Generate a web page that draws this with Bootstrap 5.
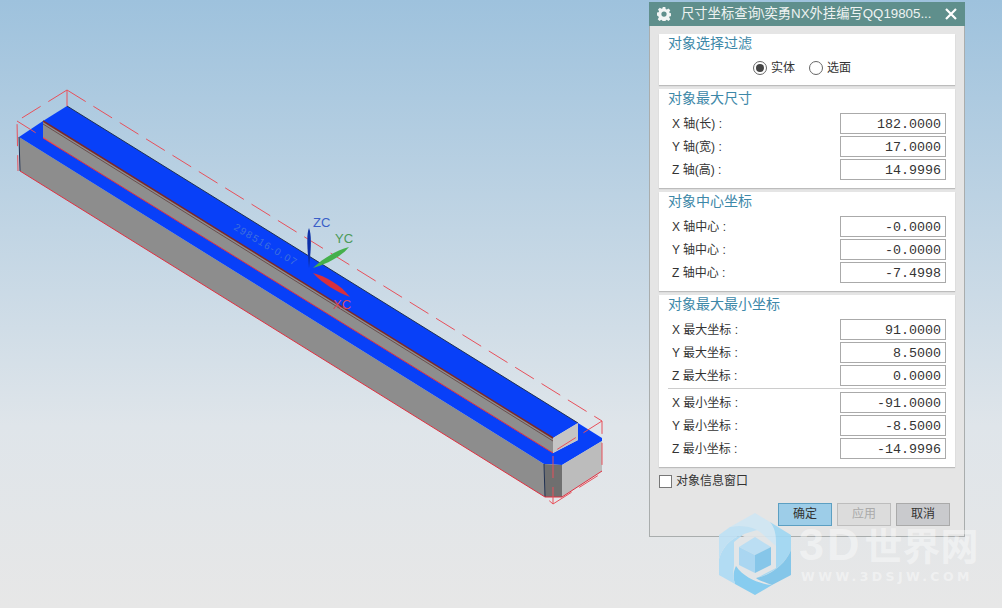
<!DOCTYPE html>
<html lang="zh">

<head>
  <meta charset="utf-8">
  <title>尺寸坐标查询</title>
  <link href="https://cdn.jsdelivr.net/npm/bootstrap@5.3.0/dist/css/bootstrap.min.css" rel="stylesheet">
  <style>
    body { width: 1002px; height: 608px; overflow: hidden; background: linear-gradient(#9ec2dd, #dfe5ea 70%, #e7e7e7); font-family: "Liberation Sans", "Noto Sans CJK SC", sans-serif; font-size: 12px; color: #333; }
    .scene { position: absolute; left: 0; top: 0; width: 1002px; height: 608px; }
    .dlg { position: absolute; left: 649px; top: 2px; width: 316px; height: 535px; background: #e5e5e5; border: 1px solid #a9adad; border-top: 0; }
    .dlg-title { height: 24px; margin: 0 -1px; background: #5f8f8c; color: #eef3f2; font-size: 13.3px; padding: 0 8px; }
    .dlg-name { margin-left: 10px; white-space: nowrap; }
    .dlg-body { padding: 8px 9px 0; }
    .box { background: #fff; box-shadow: 0 1px 1px #bcbcbc; padding: 0 9px; margin-bottom: 4px; }
    .box-head { font-size: 14px; line-height: 18px; color: #3d88a8; }
    .box-1 { height: 51px; }
    .box-2, .box-3 { height: 99px; }
    .box-4 { height: 172px; }
    .fld { height: 21px; margin: 0 0 2px 4px; }
    .fld span { padding-top: 1px; }
    .fld-first { margin-top: 6px; }
    .fld input.form-control { width: 106px; height: 21px; min-height: 21px; padding: 1px 4px 0 0; border: 1px solid #aaa; border-radius: 0; text-align: right; font: 13.33px "Liberation Mono", monospace; color: #333; background: #fff; }
    .fld-sep { border-top: 1px solid #ccc; margin: 0 0 3px; }
    .pick-row { padding-right: 10px; margin-top: 7px; }
    .pick-gap { margin-right: 14px; }
    .pick { height: 14px; width: 14px; margin: 0 4px 0 0; border: 1px solid #666; border-radius: 50%; background: #fff; display: inline-block; position: relative; }
    .pick-on::after { content: ""; position: absolute; left: 2px; top: 2px; width: 8px; height: 8px; border-radius: 50%; background: #444; }
    .tick { width: 13px; height: 13px; border: 1px solid #777; background: #fff; }
    .tick-row { margin-top: 5px; }
    .acts { gap: 5px; padding: 0 14px 10px 0; }
    .acts .btn { width: 54px; height: 23px; padding: 0; font-size: 12px; border-radius: 0; color: #333; line-height: 21px; }
    .btn-ok { background: #9dcde8; border: 1px solid #5c9fc2; }
    .btn-off { background: #dcdcdc; border: 1px solid #bdbdbd; color: #aaa !important; }
    .btn-no { background: #c9cacd; border: 1px solid #aaa; }
    .mark-title { position: absolute; left: 799px; top: 522px; color: rgba(255,255,255,.42); font-weight: 700; font-size: 38px; line-height: 46px; white-space: nowrap; }
    .mark-title b { font-size: 45px; letter-spacing: 3px; margin-right: 2px; }
    .mark-url { position: absolute; left: 801px; top: 569px; color: rgba(255,255,255,.42); font: 700 12.5px/15px "DejaVu Sans", sans-serif; letter-spacing: 3.4px; white-space: nowrap; }
  </style>
</head>

<body>
  <svg class="scene" viewBox="0 0 1002 608" font-family="Liberation Sans, sans-serif">
    <!-- part -->
    <polygon points="19,137 544,464 545,497 20,171" fill="#8d8d8d" />
    <polygon points="43,121 553,438 553,453 43,138" fill="#8e8e8e" />
    <polygon points="67,106 578,423 553,438 43,121" fill="#0840f8" />
    <polygon points="19,137 43,121 43,138 553,453 578,440 578,423 602,438 602,441 562,465 544,464" fill="#0840f8" />
    <polygon points="553,438 578,423 578,440 553,453" fill="#c5c5c5" />
    <polygon points="544,464 562,465 562,497 545,497" fill="#6f6f6f" />
    <polygon points="562,465 602,441 602,471 562,497" fill="#bcbcbc" />
    <path d="M67 106L578 423M19 137L20 171M544 464L545 497" stroke="#1f3052" stroke-width="1" fill="none" />
    <path d="M43 121L553 438" stroke="#7a2a2a" stroke-width="1.5" fill="none" />
    <path d="M43 124L553 441" stroke="#5a3030" stroke-width=".7" fill="none" />
    <path d="M43 138L553 453M20 171L545 497L562 497L602 471" stroke="#e03040" stroke-width="1" fill="none" />
    <!-- bounding box -->
    <path d="M67 90L17 121L18 171M67 90L67 106M67 90L602 421L602 471M17 121L60 148M602 421L553 452L553 504L545 497M553 504L602 473" stroke="#e8505a" stroke-width="1" stroke-dasharray="22 9" fill="none" />
    <!-- axes -->
    <text x="313" y="227" fill="#3a5fc8" font-size="13">ZC</text>
    <text x="335" y="243" fill="#4c9a58" font-size="13">YC</text>
    <text x="333" y="309" fill="#d84a58" font-size="13">XC</text>
    <path d="M309 228C311.500 234 311.500 246 309 268C307 246 306.500 234 309 228Z" fill="#0c2fa8" />
    <path d="M313 268C322 259 337 250 349 247C342 256 327 264 313 268Z" fill="#45b04c" />
    <path d="M313 273C325 276 341 285 350 297C337 292 323 284 313 273Z" fill="#d8303c" />
    <text x="233" y="229" fill="#3f70dc" font-size="10" letter-spacing="1.5" transform="rotate(31 233 229)">298516-0.07</text>
  </svg>

  <div class="dlg d-flex flex-column">
    <div class="dlg-title d-flex align-items-center">
      <svg width="14" height="14" viewBox="0 0 16 16"><path fill="#f2f5f4" fill-rule="evenodd" d="M6.500 0h3l.4 2.300 1.300.6 1.900-1.300 2.100 2.100-1.300 1.900.6 1.300 2.300.4v3l-2.300.4-.6 1.300 1.300 1.900-2.100 2.100-1.900-1.300-1.300.6-.4 2.300h-3l-.4-2.300-1.300-.6-1.900 1.300-2.100-2.100 1.300-1.900-.6-1.300L-.5 9.500v-3l2.300-.4.6-1.300L1.100 2.900l2.100-2.100 1.900 1.300 1.300-.6zM8 5a3 3 0 1 0 0 6 3 3 0 0 0 0-6z" /></svg>
      <span class="dlg-name flex-grow-1">尺寸坐标查询\奕勇NX外挂编写QQ19805...</span>
      <svg width="12" height="12" viewBox="0 0 12 12"><path d="M1 1L11 11M11 1L1 11" stroke="#fff" stroke-width="2.2" /></svg>
    </div>
    <div class="dlg-body">
      <div class="box box-1">
        <div class="box-head">对象选择过滤</div>
        <div class="pick-row d-flex justify-content-center align-items-center">
          <span class="pick pick-on"></span><span class="pick-gap">实体</span>
          <span class="pick"></span><span>选面</span>
        </div>
      </div>
      <div class="box box-2">
        <div class="box-head">对象最大尺寸</div>
        <div class="fld fld-first d-flex justify-content-between align-items-center"><span>X 轴(长) :</span><input class="form-control" value="182.0000"></div>
        <div class="fld d-flex justify-content-between align-items-center"><span>Y 轴(宽) :</span><input class="form-control" value="17.0000"></div>
        <div class="fld d-flex justify-content-between align-items-center"><span>Z 轴(高) :</span><input class="form-control" value="14.9996"></div>
      </div>
      <div class="box box-3">
        <div class="box-head">对象中心坐标</div>
        <div class="fld fld-first d-flex justify-content-between align-items-center"><span>X 轴中心 :</span><input class="form-control" value="-0.0000"></div>
        <div class="fld d-flex justify-content-between align-items-center"><span>Y 轴中心 :</span><input class="form-control" value="-0.0000"></div>
        <div class="fld d-flex justify-content-between align-items-center"><span>Z 轴中心 :</span><input class="form-control" value="-7.4998"></div>
      </div>
      <div class="box box-4">
        <div class="box-head">对象最大最小坐标</div>
        <div class="fld fld-first d-flex justify-content-between align-items-center"><span>X 最大坐标 :</span><input class="form-control" value="91.0000"></div>
        <div class="fld d-flex justify-content-between align-items-center"><span>Y 最大坐标 :</span><input class="form-control" value="8.5000"></div>
        <div class="fld d-flex justify-content-between align-items-center"><span>Z 最大坐标 :</span><input class="form-control" value="0.0000"></div>
        <div class="fld-sep"></div>
        <div class="fld d-flex justify-content-between align-items-center"><span>X 最小坐标 :</span><input class="form-control" value="-91.0000"></div>
        <div class="fld d-flex justify-content-between align-items-center"><span>Y 最小坐标 :</span><input class="form-control" value="-8.5000"></div>
        <div class="fld d-flex justify-content-between align-items-center"><span>Z 最小坐标 :</span><input class="form-control" value="-14.9996"></div>
      </div>
      <div class="tick-row d-flex align-items-center gap-1"><span class="tick"></span><span>对象信息窗口</span></div>
    </div>
    <div class="acts d-flex justify-content-end mt-auto">
      <button class="btn btn-ok" type="button">确定</button>
      <button class="btn btn-off" type="button">应用</button>
      <button class="btn btn-no" type="button">取消</button>
    </div>
  </div>

  <!-- watermark logo -->
  <svg class="scene" viewBox="0 0 1002 608">
    <g opacity=".92">
      <polygon points="755,530 776,542 776,568 755,580 734,568 734,542" fill="#e2e5e7" />
      <path d="M730 527L755 513L770 522C778 531 777 538 776 546L760 532C750 526 738 525 730 527Z" fill="#d0e7f4" />
      <path d="M770 522L791 535V550C786 563 772 574 757 578L776 568V542C776 535 775 528 770 522Z" fill="#a0d7f3" />
      <path d="M791 550V575L772 585C764 582 758 580 756 578C772 575 786 563 791 550Z" fill="#7cc4ea" />
      <path d="M736 566C744 578 760 584 772 585L755 595L735 584C733 578 733 572 736 566Z" fill="#7fcaf0" />
      <path d="M719 575V559C723 546 731 538 744 534L734 542V566C733 572 733 578 735 584Z" fill="#aedcf5" />
      <path d="M719 535L730 527C739 525 750 526 757 530L744 534C731 538 723 546 719 559Z" fill="#bfe1f5" />
      <polygon points="755,537 771,547 755,555 739,547" fill="#b8def4" />
      <polygon points="739,547 755,555 755,573 739,565" fill="#a5d5f2" />
      <polygon points="771,547 755,555 755,573 771,565" fill="#7fc4ea" />
    </g>
  </svg>
  <div class="mark-title"><b>3D</b>世界网</div>
  <div class="mark-url">WWW.3DSJW.COM</div>
</body>

</html>
